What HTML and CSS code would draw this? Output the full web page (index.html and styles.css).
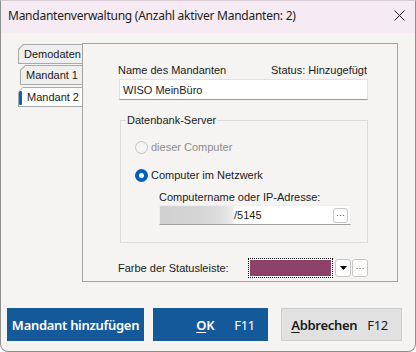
FILE: index.html
```html
<!DOCTYPE html>
<html lang="de">
<head>
    <meta charset="UTF-8">
    <meta name="viewport" content="width=device-width, initial-scale=1.0">
    <title>Mandantenverwaltung</title>
    <link rel="stylesheet" href="styles.css">
</head>
<body>
    <div class="window">
        <div class="titlebar">
            <span class="title">Mandantenverwaltung (Anzahl aktiver Mandanten: 2)</span>
            <svg class="close" width="11" height="11" viewBox="0 0 11 11">
                <path d="M0.5 0.5 L10.5 10.5 M10.5 0.5 L0.5 10.5" stroke="#1b1b1b" stroke-width="1" fill="none"/>
            </svg>
        </div>

        <div class="main">
            <div class="tabs">
                <div class="tab"><div class="tab-inner">Demodaten</div></div>
                <div class="tab tab-shift"><div class="tab-inner">Mandant 1</div></div>
                <div class="tab tab-active"><div class="tab-inner"><span class="marker"></span>Mandant 2</div></div>
            </div>

            <div class="panel">
                <div class="label-row">
                    <span>Name des Mandanten</span>
                    <span>Status: Hinzugefügt</span>
                </div>
                <div class="textbox">WISO MeinBüro</div>

                <fieldset class="group">
                    <legend>Datenbank-Server</legend>
                    <div class="radio-row disabled">
                        <span class="radio"></span>
                        <span>dieser Computer</span>
                    </div>
                    <div class="radio-row">
                        <span class="radio checked"></span>
                        <span>Computer im Netzwerk</span>
                    </div>
                    <div class="sub-label">Computername oder IP-Adresse:</div>
                    <div class="textbox host">
                        <span class="blur"></span>
                        <span class="host-text">/5145</span>
                        <span class="mini-btn">···</span>
                    </div>
                </fieldset>

                <div class="color-row">
                    <span class="color-label">Farbe der Statusleiste:</span>
                    <span class="color-box"><span class="swatch"></span></span>
                    <span class="mini-btn drop">
                        <svg width="7" height="4" viewBox="0 0 7 4"><path d="M0 0 H7 L3.5 4 Z" fill="#000"/></svg>
                    </span>
                    <span class="mini-btn">···</span>
                </div>
            </div>
        </div>

        <div class="footer">
            <button class="btn btn-blue btn-add">Mandant hinzufügen</button>
            <button class="btn btn-blue btn-ok"><span class="word"><u>O</u>K</span><span class="key key-wide">F11</span></button>
            <button class="btn btn-gray btn-cancel"><span class="word"><u>A</u>bbrechen</span><span class="key">F12</span></button>
        </div>
    </div>
</body>
</html>
```

FILE: styles.css
```css
html, body {
    margin: 0;
    padding: 0;
    background: #ffffff;
}
body {
    font-family: "Liberation Sans", Arial, sans-serif;
    font-size: 11px;
    color: #1a1a1a;
}
.window {
    width: 416px;
    height: 352px;
    box-sizing: border-box;
    border: 1px solid #8f8f8f;
    border-top-color: #d9cdd5;
    border-radius: 0 0 8px 8px;
    overflow: hidden;
    background: #f5f4f2;
    display: flex;
    flex-direction: column;
}
.titlebar {
    height: 32px;
    flex: none;
    background: #f6ebf2;
    display: flex;
    align-items: center;
    justify-content: space-between;
    padding: 0 10px 0 7px;
    font-family: "Noto Sans", sans-serif;
    font-size: 12px;
    letter-spacing: -0.25px;
    color: #1b1b1b;
}
.title {
    margin-top: -3px;
}
.close {
    margin-top: -4px;
}
.main {
    display: flex;
    padding: 10px 0 0 17px;
}
.tabs {
    width: 64px;
    padding-top: 1px;
    display: flex;
    flex-direction: column;
}
.tab {
    height: 20px;
    background: #a9a9a9;
    padding: 1px 0 1px 1px;
    box-sizing: border-box;
    clip-path: polygon(5px 0, 100% 0, 100% 100%, 0 100%, 0 5px);
    margin-bottom: 1px;
}
.tab-inner {
    height: 100%;
    background: #efefef;
    clip-path: polygon(4.5px 0, 100% 0, 100% 100%, 0 100%, 0 4.5px);
    display: flex;
    align-items: center;
    padding-left: 5px;
    white-space: nowrap;
    font-size: 11px;
    color: #1a1a1a;
}
.tab-shift {
    margin-left: 2px;
}
.tab-shift .tab-inner {
    padding-left: 5px;
}
.tab-active {
    margin-top: 1px;
    padding-left: 0;
    background: #a9a9a9;
}
.tab-active .tab-inner {
    background: #ffffff;
    padding-left: 0;
    clip-path: polygon(5px 0, 100% 0, 100% 100%, 0 100%, 0 5px);
    border-left: 1px solid #a9a9a9;
}
.marker {
    flex: none;
    width: 3px;
    height: 14px;
    margin-top: 2px;
    background: #0067c0;
    border-radius: 1px;
    margin-right: 5px;
}
.panel {
    width: 316px;
    height: 239px;
    box-sizing: border-box;
    border: 1px solid #a3a3a3;
    padding: 18px 29px 0 35px;
    display: flex;
    flex-direction: column;
}
.label-row {
    display: flex;
    justify-content: space-between;
    height: 16px;
    line-height: 16px;
    margin-bottom: 1px;
    padding-right: 1px;
}
.textbox {
    height: 21px;
    box-sizing: border-box;
    margin-left: 1px;
    background: #ffffff;
    border: 1px solid #e1e1e1;
    border-bottom-color: #9a9a9a;
    display: flex;
    align-items: center;
    padding-left: 3px;
}
.group {
    margin: 12px 0 0 2px;
    padding: 0 0 17px 14px;
    border: 1px solid #dcdcdc;
    min-width: 0;
}
.group legend {
    padding: 0 1px;
    margin-left: -9px;
    line-height: 16px;
}
.radio-row {
    display: flex;
    align-items: center;
    height: 16px;
    margin-top: 12px;
}
.radio-row.disabled {
    margin-top: 11px;
    color: #8c8c8c;
}
.radio {
    width: 13px;
    height: 13px;
    box-sizing: border-box;
    border: 1px solid #c3c3c3;
    border-radius: 50%;
    background: #f4f4f4;
    margin-right: 3px;
}
.radio.checked {
    border: 4px solid #005fb8;
    background: #ffffff;
}
.sub-label {
    margin: 6px 0 0 24px;
    line-height: 16px;
    height: 16px;
}
.textbox.host {
    margin: 0 16px 0 24px;
    height: 20px;
    padding: 0 2px 0 0;
    border-color: #eeeeee;
    border-bottom-color: #a0a0a0;
}
.blur {
    width: 74px;
    height: 18px;
    background: linear-gradient(90deg, #d1d1d1, #d5d5d5 55%, #dedede 80%, #eeeeee);
}
.host-text {
    flex: 1;
}
.mini-btn {
    width: 15px;
    height: 15px;
    box-sizing: border-box;
    border: 1px solid #c6c6c6;
    border-radius: 3px;
    background: #ffffff;
    display: flex;
    align-items: center;
    justify-content: center;
    font-size: 9px;
    line-height: 1;
    color: #333333;
}
.color-row {
    display: flex;
    align-items: center;
    margin-top: 15px;
    height: 20px;
}
.color-label {
    width: 130px;
}
.color-box {
    width: 85px;
    height: 20px;
    box-sizing: border-box;
    border: 1px dotted #000000;
    padding: 1px;
    background: #ffffff;
    display: flex;
}
.swatch {
    flex: 1;
    background: #8e4268;
}
.color-row .mini-btn {
    width: 16px;
    height: 18px;
    margin-left: 1px;
}
.color-row .drop {
    margin-left: 2px;
}
.footer {
    display: flex;
    padding: 26px 0 0 6px;
}
.btn {
    height: 33px;
    border: none;
    font-family: "Noto Sans", sans-serif;
    font-size: 13px;
    font-weight: 600;
    letter-spacing: -0.3px;
    display: flex;
    align-items: center;
    padding: 0;
}
.btn-blue {
    background: #145a9b;
    color: #ffffff;
}
.btn-gray {
    background: #e1e1e1;
    color: #1a1a1a;
    border: 1px solid #cdcdcd;
}
.btn-add {
    width: 137px;
    justify-content: center;
}
.btn-ok {
    width: 115px;
    margin-left: 9px;
    justify-content: flex-end;
    padding-right: 13px;
}
.btn-cancel {
    width: 121px;
    margin-left: 13px;
    justify-content: flex-end;
    padding-right: 13px;
}
.key {
    font-weight: 400;
    margin-left: 10px;
}
.key-wide {
    margin-left: 20px;
}
u {
    text-underline-offset: 2px;
}
```
